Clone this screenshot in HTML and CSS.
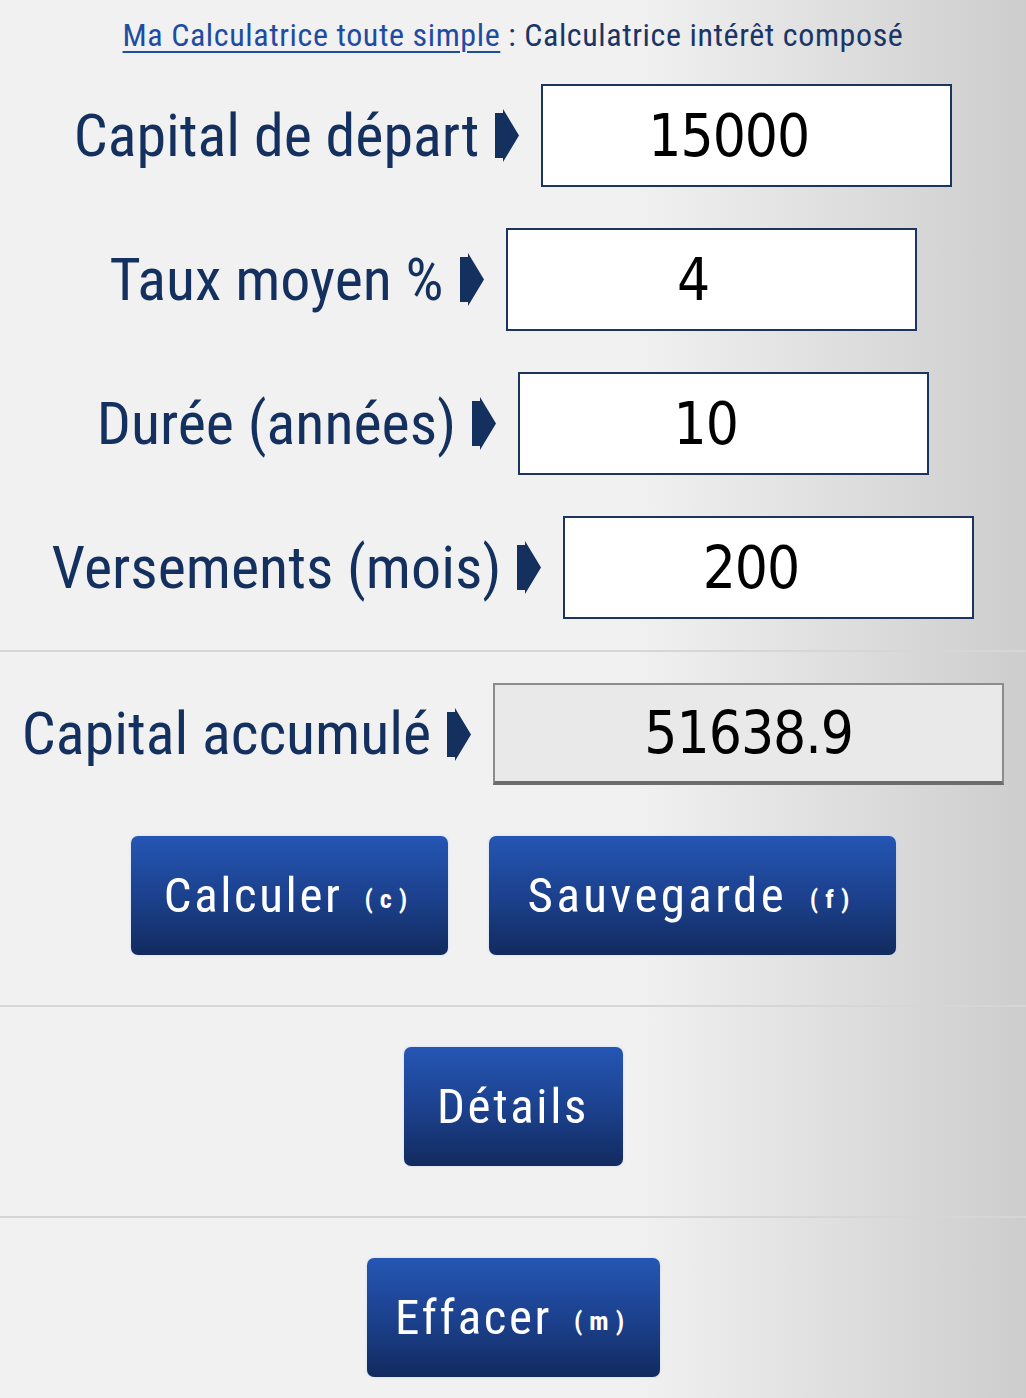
FILE: index.html
```html
<!DOCTYPE html>
<html lang="fr">
<head>
<meta charset="utf-8">
<title>Calculatrice intérêt composé</title>
<link rel="stylesheet" href="styles.css">
</head>
<body>
<header class="title"><a class="home" href="#">Ma Calculatrice toute simple</a> : Calculatrice intérêt composé</header>
<main class="calc">
  <div class="fields">
    <div class="field">
      <label class="lbl" for="cap">Capital de départ</label>
      <svg class="arrow" viewBox="0 0 24 53" width="24" height="53"><polygon points="0,4 8,4 8,0 24,26.5 8,53 8,49 0,49"/></svg>
      <input class="box" id="cap" type="text" value="15000">
    </div>
    <div class="field">
      <label class="lbl" for="taux">Taux moyen %</label>
      <svg class="arrow" viewBox="0 0 24 53" width="24" height="53"><polygon points="0,4 8,4 8,0 24,26.5 8,53 8,49 0,49"/></svg>
      <input class="box" id="taux" type="text" value="4">
    </div>
    <div class="field">
      <label class="lbl" for="duree">Durée (années)</label>
      <svg class="arrow" viewBox="0 0 24 53" width="24" height="53"><polygon points="0,4 8,4 8,0 24,26.5 8,53 8,49 0,49"/></svg>
      <input class="box" id="duree" type="text" value="10">
    </div>
    <div class="field">
      <label class="lbl" for="vers">Versements (mois)</label>
      <svg class="arrow" viewBox="0 0 24 53" width="24" height="53"><polygon points="0,4 8,4 8,0 24,26.5 8,53 8,49 0,49"/></svg>
      <input class="box" id="vers" type="text" value="200">
    </div>
  </div>
  <hr class="sep">
  <div class="field result">
    <span class="lbl">Capital accumulé</span>
    <svg class="arrow" viewBox="0 0 24 53" width="24" height="53"><polygon points="0,4 8,4 8,0 24,26.5 8,53 8,49 0,49"/></svg>
    <output class="out">51638.9</output>
  </div>
  <div class="actions first">
    <button class="btn b-calc" type="button">Calculer <span class="key">(c)</span></button>
    <button class="btn b-save" type="button">Sauvegarde <span class="key">(f)</span></button>
  </div>
  <hr class="sep">
  <div class="actions">
    <button class="btn b-det" type="button">Détails</button>
  </div>
  <hr class="sep">
  <div class="actions">
    <button class="btn b-eff" type="button">Effacer <span class="key">(m)</span></button>
  </div>
</main>
</body>
</html>
```
FILE: styles.css
```css
html, body {
  margin: 0;
  padding: 0;
}
body {
  min-height: 1398px;
  background: linear-gradient(to right, #f1f1f1 0%, #f1f1f1 62%, #cdcdcd 100%);
  font-family: "Roboto Condensed", "DejaVu Sans Condensed", sans-serif;
  color: #14305e;
}
.title {
  padding-top: 15px;
  height: 40px;
  line-height: 40px;
  font-size: 32px;
  letter-spacing: 0.6px;
  text-align: center;
  color: #1a3566;
}
.home {
  color: #1f4ca2;
  text-decoration: underline;
  text-decoration-thickness: 2px;
  text-underline-offset: 5px;
}
.calc {
  display: flex;
  flex-direction: column;
}
.fields {
  margin-top: 29px;
  display: flex;
  flex-direction: column;
  gap: 41px;
}
.field {
  display: flex;
  align-items: center;
  justify-content: center;
  height: 103px;
}
.lbl {
  font-size: 60px;
  line-height: 60px;
  letter-spacing: 0;
  color: #14305e;
  white-space: nowrap;
}
.arrow {
  flex: none;
  margin-left: 16px;
  margin-right: 22px;
  fill: #14305e;
}
.box {
  box-sizing: border-box;
  width: 411px;
  height: 103px;
  margin: 0;
  border: 2px solid #1b3560;
  background: #ffffff;
  padding: 0 36px 0 0;
  text-align: center;
  font-family: "DejaVu Sans Condensed", "DejaVu Sans", sans-serif;
  font-size: 58px;
  letter-spacing: -1px;
  color: #000;
  outline: none;
}
.sep {
  margin: 0;
  border: 0;
  height: 2px;
  background: #d6d6d6;
}
.fields + .sep {
  margin-top: 31px;
}
.result {
  margin-top: 31px;
  height: 102px;
}
.out {
  box-sizing: border-box;
  width: 511px;
  height: 102px;
  display: flex;
  align-items: center;
  justify-content: center;
  background: #e9e9e9;
  border: 2px solid #8c8c8c;
  border-bottom: 4px solid #6c6c6c;
  font-family: "DejaVu Sans Condensed", "DejaVu Sans", sans-serif;
  font-size: 58px;
  letter-spacing: -1px;
  color: #000;
}
.actions {
  display: flex;
  justify-content: center;
  gap: 41px;
  padding: 40px 0 50px;
}
.actions.first {
  padding-top: 51px;
}
.btn {
  height: 119px;
  border: 0;
  border-radius: 7px;
  padding: 0;
  background: linear-gradient(to bottom, #2556b4 0%, #1b3f8a 55%, #122b5f 100%);
  box-shadow: 0 0 3px rgba(170, 200, 255, 0.55);
  color: #fff;
  font-family: "Roboto Condensed", "DejaVu Sans Condensed", sans-serif;
  font-size: 49px;
  letter-spacing: 2.6px;
  white-space: nowrap;
  cursor: pointer;
}
.b-save {
  letter-spacing: 3.4px;
}
.key {
  font-size: 26px;
  font-weight: bold;
  letter-spacing: 7px;
  margin-left: 8px;
  vertical-align: 4px;
}
.b-calc { width: 317px; }
.b-save { width: 407px; }
.b-det { width: 219px; }
.b-eff { width: 293px; }
```
